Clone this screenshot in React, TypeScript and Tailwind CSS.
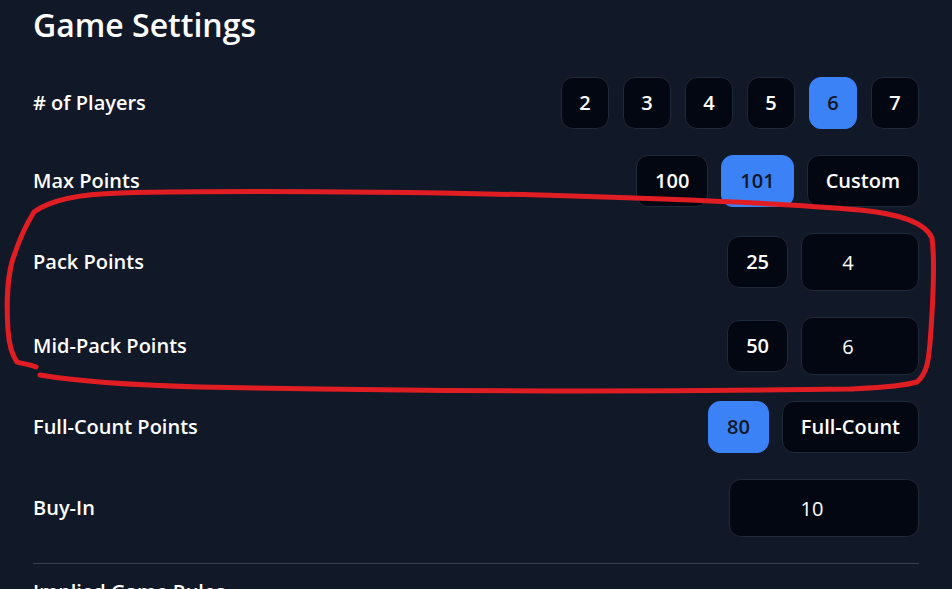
import { useState } from 'react';

const btnBase =
  'h-[52px] rounded-xl border text-xl font-semibold flex items-center justify-center';
const btnIdle = 'bg-[#030712] border-[#1f2937] text-white';
const btnActive = 'bg-[#3b82f6] border-[#3b82f6] text-[#111827]';

function Choice({
  label,
  active,
  square,
  onClick,
}: {
  label: string;
  active?: boolean;
  square?: boolean;
  onClick?: () => void;
}) {
  return (
    <button
      type="button"
      onClick={onClick}
      className={`${btnBase} ${square ? 'w-12' : 'px-[18px]'} ${active ? btnActive : btnIdle}`}
    >
      {label}
    </button>
  );
}

function NumberBox({ value, width }: { value: string; width: string }) {
  return (
    <input
      type="text"
      readOnly
      value={value}
      className={`${width} h-[58px] rounded-xl border border-[#1f2937] bg-[#030712] pl-3 pr-9 text-center text-xl text-white outline-none`}
    />
  );
}

function Row({ label, children }: { label: string; children: React.ReactNode }) {
  return (
    <div className="flex items-center justify-between">
      <span className="text-xl font-semibold">{label}</span>
      <div className="flex items-center gap-[13px]">{children}</div>
    </div>
  );
}

export default function App() {
  const [players, setPlayers] = useState(6);
  const [maxPoints, setMaxPoints] = useState('101');

  return (
    <div
      className="relative min-h-screen overflow-hidden bg-[#111827] px-[33px] pt-[5px] text-white"
      style={{ fontFamily: '"Open Sans", "Noto Sans", sans-serif' }}
    >
      <h1 className="text-[32px] font-semibold leading-[40px]">Game Settings</h1>

      <div className="mt-[32px] flex flex-col gap-[26px]">
        <Row label="# of Players">
          <div className="flex items-center gap-[14px]">
            {[2, 3, 4, 5, 6, 7].map((n) => (
              <Choice key={n} square label={String(n)} active={players === n} onClick={() => setPlayers(n)} />
            ))}
          </div>
        </Row>
        <Row label="Max Points">
          {['100', '101', 'Custom'].map((p) => (
            <Choice key={p} label={p} active={maxPoints === p} onClick={() => setMaxPoints(p)} />
          ))}
        </Row>
        <Row label="Pack Points">
          <Choice label="25" />
          <NumberBox value="4" width="w-[118px]" />
        </Row>
        <Row label="Mid-Pack Points">
          <Choice label="50" />
          <NumberBox value="6" width="w-[118px]" />
        </Row>
        <Row label="Full-Count Points">
          <Choice label="80" active />
          <Choice label="Full-Count" />
        </Row>
        <Row label="Buy-In">
          <NumberBox value="10" width="w-[190px]" />
        </Row>
      </div>

      <div className="mt-[26px] border-t border-[#374151]" />
      <h2 className="mt-[14px] text-xl font-semibold">Implied Game Rules</h2>

      {/* hand-drawn annotation */}
      <svg className="pointer-events-none absolute left-0 top-0" width="952" height="589" viewBox="0 0 952 589">
        <path
          d="M36 367 C30 364 22 364 17 362 C12 355 9 345 8 330 C6 300 8 270 15 253 C20 238 26 225 34 212 C50 200 80 194 120 193 C250 190 400 192 540 195 C650 198 780 203 860 210 C900 214 925 222 932 238 C935 260 933 300 931 330 C929 355 929 372 917 382 C900 387 870 388 850 389 C650 392 400 391 200 387 C130 385 80 382 40 375"
          fill="none"
          stroke="#e11d24"
          strokeWidth="5"
          strokeLinecap="round"
          strokeLinejoin="round"
        />
      </svg>
    </div>
  );
}
